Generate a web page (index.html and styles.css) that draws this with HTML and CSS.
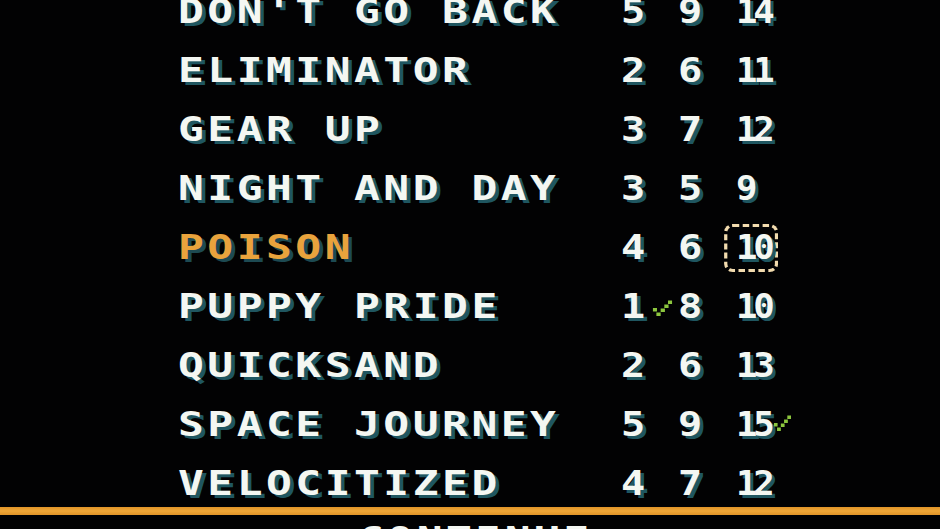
FILE: index.html
```html
<!DOCTYPE html>
<html>
<head>
<meta charset="utf-8">
<link rel="stylesheet" href="styles.css">
</head>
<body>
<div class="screen">
  <ul class="list">
    <li class="row"><span class="name"><span class="txt">DON'T GO BACK</span></span><span class="n">5</span><span class="n">9</span><span class="n n3">14</span></li>
    <li class="row"><span class="name"><span class="txt">ELIMINATOR</span></span><span class="n">2</span><span class="n">6</span><span class="n n3">11</span></li>
    <li class="row"><span class="name"><span class="txt">GEAR UP</span></span><span class="n">3</span><span class="n">7</span><span class="n n3">12</span></li>
    <li class="row"><span class="name"><span class="txt">NIGHT AND DAY</span></span><span class="n">3</span><span class="n">5</span><span class="n n3">9</span></li>
    <li class="row sel"><span class="name"><span class="txt">POISON</span></span><span class="n">4</span><span class="n">6</span><span class="n n3"><span class="box">10</span></span></li>
    <li class="row"><span class="name"><span class="txt">PUPPY PRIDE</span></span><span class="n">1<svg class="check" width="16" height="17" viewBox="0 0 16 17"><rect x="0" y="8" width="3.5" height="3.5"/><rect x="3" y="12.5" width="3.5" height="3.5"/><rect x="6.5" y="8.5" width="3.5" height="3.5"/><rect x="9.5" y="4.5" width="3.5" height="3.5"/><rect x="12.5" y="0.5" width="3.5" height="3.5"/></svg></span><span class="n">8</span><span class="n n3">10</span></li>
    <li class="row"><span class="name"><span class="txt">QUICKSAND</span></span><span class="n">2</span><span class="n">6</span><span class="n n3">13</span></li>
    <li class="row"><span class="name"><span class="txt">SPACE JOURNEY</span></span><span class="n">5</span><span class="n">9</span><span class="n n3">15<svg class="check" width="16" height="17" viewBox="0 0 16 17"><rect x="0" y="8" width="3.5" height="3.5"/><rect x="3" y="12.5" width="3.5" height="3.5"/><rect x="6.5" y="8.5" width="3.5" height="3.5"/><rect x="9.5" y="4.5" width="3.5" height="3.5"/><rect x="12.5" y="0.5" width="3.5" height="3.5"/></svg></span></li>
    <li class="row"><span class="name"><span class="txt">VELOCITIZED</span></span><span class="n">4</span><span class="n">7</span><span class="n n3">12</span></li>
  </ul>
  <div class="bar"></div>
  <div class="footer"><span class="txt">CONTINUE</span></div>
</div>
</body>
</html>
```
FILE: styles.css
```css
html, body {
  margin: 0;
  padding: 0;
  background: #000;
}
.screen {
  width: 940px;
  height: 529px;
  overflow: hidden;
  background: #020203;
  font-family: "DejaVu Sans Mono", "Liberation Mono", monospace;
  font-weight: bold;
  font-size: 33px;
  color: #f4f7f2;
  text-shadow: 3px 3px 0 #1f5660;
}
.list {
  list-style: none;
  margin: -18px 0 0 0;
  padding: 0 0 0 178px;
}
.row {
  display: grid;
  grid-template-columns: 443px 57px 58px 1fr;
  height: 59px;
  align-items: center;
  line-height: 59px;
}
.txt {
  display: inline-block;
  transform: scaleX(1.3);
  transform-origin: left center;
  letter-spacing: 2.7px;
  white-space: pre;
}
.sel .name {
  color: #e9a33c;
  text-shadow: 3px 3px 0 #1d4a52;
}
.n {
  display: flex;
  align-items: center;
  white-space: nowrap;
  transform: scaleX(1.22);
  transform-origin: left center;
}
.n3 {
  letter-spacing: -4px;
  transform: scaleX(1.08);
}
.box {
  display: inline-block;
  line-height: 38px;
  padding: 2px 4px 2px 8px;
  margin-left: -11px;
  border: 3px dashed #f2dbae;
  border-radius: 8px;
}
.check {
  fill: #8cc63e;
  margin-left: 6px;
  margin-top: 3px;
}
.n3 .check {
  margin-left: 3px;
  margin-top: -2px;
}
.bar {
  height: 8px;
  margin-top: -6px;
  background: linear-gradient(#e09428, #f0a838 50%, #e09428);
}
.footer {
  padding-left: 358px;
  margin-top: 10px;
  line-height: 30px;
}
```
